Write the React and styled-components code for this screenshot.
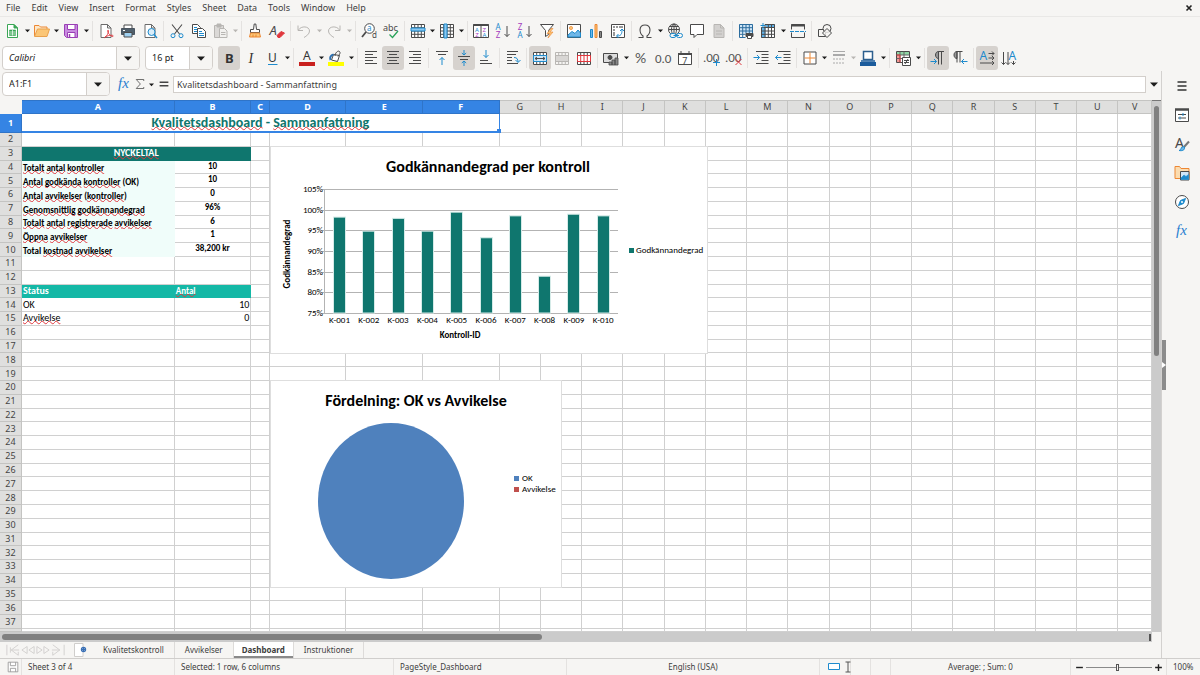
import React from 'react';
import styled, { createGlobalStyle, css } from 'styled-components';

const INK = '#4a4a4a';
const BLUE = '#1e8bcd';
const RED = '#e0383e';
const ORANGE = '#ed8733';
const GREY = '#b8b6b3';
const TEAL = '#0f766e';
const ACCENT = '#3584e4';

const GlobalStyle = createGlobalStyle`
  * { box-sizing: border-box; }
  body {
    margin: 0;
    background: #f6f5f3;
    color: #3d3d3d;
    font: 9px/12px "Noto Sans", sans-serif;
  }
  button, input {
    margin: 0;
    padding: 0;
    border: 0;
    background: none;
    color: inherit;
    font: inherit;
  }
  svg { flex: none; overflow: visible; }
`;

const Window = styled.div`
  display: flex;
  flex-direction: column;
  height: 100vh;
  overflow: hidden;
`;

const MenuBar = styled.nav`
  display: flex;
  align-items: center;
  flex: none;
  height: 17px;
  padding: 0 6px 0 0;
  border-bottom: 1px solid #e9e8e6;
`;

const MenuItem = styled.button`
  padding: 0 5px 0 6px;
`;

const CloseButton = styled.button`
  display: flex;
  margin-left: auto;
`;

const Toolbar = styled.div`
  display: flex;
  align-items: center;
  flex: none;
  height: 27px;
  padding-left: 2px;
`;

const ToolButton = styled.button`
  display: flex;
  align-items: center;
  justify-content: center;
  flex: none;
  width: 22px;
  height: 24px;
  border-radius: 3px;
  background: ${props => (props.$active ? '#d6d2ce' : 'none')};
`;

const ArrowButton = styled.button`
  display: flex;
  align-items: center;
  justify-content: center;
  flex: none;
  width: ${props => (props.$wide ? '8px' : '7px')};
  height: 24px;
`;

const Separator = styled.span`
  flex: none;
  width: 1px;
  height: 20px;
  margin: 0 2px;
  background: #e4e2e0;
`;

const Combo = styled.div`
  display: flex;
  flex: none;
  height: 24px;
  width: ${props => props.$width}px;
  margin-right: 5px;
  border: 1px solid #d3cfcb;
  border-radius: 4px;
  background: #fff;
  overflow: hidden;
`;

const ComboInput = styled.input`
  flex: 1;
  min-width: 0;
  padding-left: 6px;
  color: #222;
  font-style: ${props => (props.$italic ? 'italic' : 'normal')};
`;

const ComboArrow = styled.button`
  display: flex;
  align-items: center;
  justify-content: center;
  width: 23px;
  border-left: 1px solid #d3cfcb;
  background: #f6f5f3;
`;

const Main = styled.div`
  display: flex;
  flex: 1;
  min-height: 0;
`;

const Document = styled.main`
  display: flex;
  flex-direction: column;
  flex: 1;
  min-width: 0;
`;

const FormulaBar = styled.div`
  display: flex;
  align-items: center;
  flex: none;
  height: 29px;
  padding: 0 0 3px 2px;
`;

const FormulaButton = styled.button`
  display: flex;
  align-items: center;
  justify-content: center;
  width: ${props => props.$width || 14}px;
  height: 24px;
`;

const FormulaInput = styled.input`
  flex: 1;
  height: 17px;
  padding: 0 3px;
  border: 1px solid #d3cfcb;
  background: #fff;
`;

const SheetArea = styled.div`
  display: flex;
  flex: 1;
  min-height: 0;
`;

const Canvas = styled.div`
  position: relative;
  flex: 1;
  min-width: 0;
  overflow: hidden;
`;

const Grid = styled.table`
  display: grid;
  height: 100%;
  grid-template-columns:
    22px minmax(0, 1525fr) minmax(0, 765fr) minmax(0, 185fr)
    repeat(3, minmax(0, 765fr)) repeat(15, minmax(0, 412fr)) minmax(0, 335fr);
  grid-template-rows: 14px 19px repeat(36, minmax(0, 1fr)) 3px;

  thead, tbody, tr { display: contents; }
`;

const headCell = css`
  display: flex;
  align-items: center;
  justify-content: center;
  padding: 0;
  overflow: hidden;
  border: 0 solid #c4c4c2;
  border-width: 0 1px 1px 0;
  font-weight: ${props => (props.$selected ? 700 : 400)};
  color: ${props => (props.$selected ? '#fff' : '#444')};
  background: ${props => (props.$selected ? ACCENT : '#dfdfde')};
  ${props => props.$selected && 'border-color: #2f74c8;'}
`;

const ColumnHead = styled.th`
  ${headCell}
  border-top-width: 1px;
`;

const RowHead = styled.th`
  ${headCell}
`;

const Corner = styled.td`
  padding: 0;
`;

const Cell = styled.td`
  display: flex;
  align-items: ${props => props.$valign || 'center'};
  justify-content: ${props => props.$align || 'flex-start'};
  grid-column: span ${props => props.colSpan || 1};
  min-width: 0;
  padding: 0 1px;
  border: 0 solid #d0d0d0;
  border-width: 0 1px 1px 0;
  background: #fff;
  color: #000;
  font-family: Carlito, Lato, sans-serif;
  font-size: ${props => (props.$small ? '9px' : '10px')};
  line-height: 10px;
  font-weight: ${props => (props.$bold ? 700 : 400)};
  white-space: pre;
  ${props => props.$fill && css`
    background: ${props.$fill};
    border-color: ${props.$fill};
  `}
  ${props => props.$color && `color: ${props.$color};`}
  ${props => props.$title && css`
    position: relative;
    font-size: 14px;
    line-height: 16px;
    border-color: ${ACCENT};
    border-bottom-width: 2px;
  `}
`;

const Misspelt = styled.span`
  text-decoration: underline wavy ${RED} 1px;
  text-decoration-skip-ink: none;
  text-underline-offset: -1px;
`;

const FillHandle = styled.span`
  position: absolute;
  right: -2px;
  bottom: -2px;
  width: 4px;
  height: 4px;
  background: ${ACCENT};
`;

const ChartFrame = styled.figure`
  position: absolute;
  left: 270px;
  top: ${props => props.$top}px;
  width: ${props => props.$width}px;
  height: 208px;
  margin: 0;
  background: #fff;
  outline: 1px solid #dedede;
  outline-offset: -1px;

  svg { display: block; }
  text { font-family: Carlito, Lato, sans-serif; font-size: 9px; }
  .title { font-size: 16px; font-weight: 700; }
  .axis { font-weight: 700; }
`;

const VScroll = styled.div`
  flex: none;
  width: 9px;
  padding: 5px 2px;
  background: #cbcbcb;
  border-top: 1px solid #777;
`;

const VThumb = styled.div`
  width: 5px;
  height: 48%;
  border-radius: 3px;
  background: #808080;
`;

const HScroll = styled.div`
  display: flex;
  align-items: center;
  justify-content: space-between;
  flex: none;
  height: 10px;
  margin-right: 9px;
  padding: 0 1px 0 2px;
  background: #cbcbcb;
`;

const HThumb = styled.div`
  width: 47%;
  height: 6px;
  border-radius: 3px;
  background: #808080;
`;

const HGrip = styled.div`
  width: 2px;
  height: 7px;
  background: #555;
`;

const TabBar = styled.div`
  display: flex;
  flex: none;
  height: 16px;
  font-size: 8px;
`;

const TabNav = styled.div`
  display: flex;
  align-items: center;
  width: 71px;
  padding-left: 6px;
`;

const NavButton = styled.button`
  display: flex;
  width: 15px;
`;

const AddTab = styled.button`
  display: flex;
  align-items: center;
  width: 22px;
  padding-left: 2px;
`;

const SheetTab = styled.button`
  padding: 0 10px;
  border-right: 1px solid #dddbd9;
  ${props => props.$active && css`
    padding: 0 8px;
    font-weight: 700;
    background: #fff;
    box-shadow: inset 0 -2px 0 #8a8a8a;
  `}
`;

const SideBar = styled.aside`
  display: flex;
  flex: none;
  width: 39px;
  border-left: 1px solid #d3d1cf;
`;

const Splitter = styled.div`
  display: flex;
  align-items: center;
  align-self: center;
  width: 4px;
  height: 50px;
  background: #8c8c8c;
`;

const Deck = styled.div`
  display: flex;
  flex-direction: column;
  align-items: center;
  flex: 1;
  padding-right: 3px;
`;

const DeckButton = styled.button`
  display: flex;
  align-items: center;
  justify-content: center;
  width: 26px;
  height: 29px;
`;

const StatusBar = styled.footer`
  display: grid;
  flex: none;
  grid-template-columns: 22px 153px 219px 173fr 253fr 31px 20px 20px 180px 96px 33px;
  height: 17px;
  border-top: 1px solid #d0cecc;
  font-size: 8px;
`;

const StatusItem = styled.div`
  display: flex;
  align-items: center;
  justify-content: ${props => (props.$center ? 'center' : 'flex-start')};
  gap: 2px;
  padding: 0 6px;
  border-right: ${props => (props.$last ? '0' : '1px')} solid #e4e2e0;
  white-space: nowrap;
`;

const ZoomSlider = styled.input`
  appearance: none;
  width: 66px;
  height: 9px;

  &::-webkit-slider-runnable-track {
    height: 1px;
    background: #8a8a8a;
  }
  &::-webkit-slider-thumb {
    appearance: none;
    width: 3px;
    height: 7px;
    margin-top: -3px;
    border: 1px solid #555;
    background: #f6f5f3;
  }
`;

const lines = (d, stroke = INK, width = 1) => <path d={d} stroke={stroke} strokeWidth={width} />;
const letter = (ch, x, y, size, fill = INK, extra = {}) => (
  <text x={x} y={y} fontSize={size} fill={fill} stroke="none" {...extra}>{ch}</text>
);

const page = 'M3 1.5h6.500l3.500 3.500v9.500h-10zM9.500 1.500v3.500h3.500';
const gridBox = 'M1.500 1.500h13v13h-13zM1.500 4.700h13M1.500 8h13M1.500 11.300h13M4.700 1.500v13M8 1.500v13M11.300 1.500v13';
const mergeBox = 'M1.500 2.500h13v12h-13zM1.500 5.500h13M1.500 11.500h13M4.700 2.500v3M8 2.500v3M11.300 2.500v3M4.700 11.500v3M8 11.500v3M11.300 11.500v3';

const icons = {
  newDoc: (
    <>
      <path d="M2.500 1.500h6.500l3.500 3.500v9.500h-10z" fill="#fff" stroke="#3aa655" />
      <path d="M9 1.500v3.500h3.500z" fill="#3aa655" stroke="#3aa655" />
      <path d="M4.500 7h6v5.500h-6z" fill="#3aa655" stroke="#3aa655" strokeWidth=".6" />
      {lines('M4.500 9h6M4.500 11h6M7.500 7v5.500', '#fff', 0.7)}
    </>
  ),
  open: (
    <>
      <path d="M.5 13V2.500h4.500l1.500 1.500H13v3" fill="#fde7c8" stroke={ORANGE} />
      <path d="M.5 13.500L3.500 6h12l-2.500 7.500z" fill="#fbc677" stroke="#e9a14d" />
    </>
  ),
  save: (
    <>
      <path d="M1.500 1.500h13v13h-11l-2-2z" fill="#c98be0" stroke="#9a3fb5" />
      <path d="M4.500 1.500h7.500v5h-7.500z" fill="#fff" stroke="#9a3fb5" />
      <path d="M4.500 9.500h7.500v5h-7.500z" fill="#fff" stroke="#9a3fb5" />
      {lines('M6.500 11v3', '#9a3fb5', 1.500)}
    </>
  ),
  pdf: (
    <>
      <path d={page} fill="#fff" stroke="#6b6b6b" />
      <path d="M7 14c2-1 3.500-4 3.500-6 0-1.500-1.300-1-.8.5.7 2.500 3 4.500 4.500 5 1.500.3 1.500-1.300-.5-1.300-2.500 0-4.500.6-6.200 1.800-1.500 1-1.300 1-.5 0z" stroke={RED} strokeWidth=".9" />
    </>
  ),
  print: (
    <>
      <path d="M4 2h8v4H4z" fill="#fff" stroke={INK} />
      <path d="M1.500 5.500h13v6h-13z" fill="#4f5f6b" stroke="#4a5560" />
      <path d="M4 9.500h8v4.500H4z" fill="#9fd0f0" stroke={INK} />
      {lines('M3 7.500h2', '#fff')}
    </>
  ),
  preview: (
    <>
      <path d={page} fill="#fff" stroke="#6b6b6b" />
      <circle cx="9.500" cy="9" r="3.500" fill="#d9edf9" stroke={BLUE} />
      {lines('M12 11.500l3 3.500', BLUE, 1.400)}
    </>
  ),
  cut: (
    <>
      {lines('M3 1.500l7.500 9.500M13 1.500L5.500 11', INK, 1.100)}
      <circle cx="4" cy="12.700" r="2" stroke={BLUE} />
      <circle cx="12" cy="12.700" r="2" stroke={BLUE} />
    </>
  ),
  copy: (
    <>
      <path d="M1.500 1.500h5l3 3v6h-8z" fill="#fff" />
      {lines('M3 4.500h3M3 6.500h3M3 8.500h3', BLUE)}
      <path d="M6.500 5.500h5l3 3v6h-8z" fill="#fff" />
      {lines('M8 8.500h3M8 10.500h5M8 12.500h5', BLUE)}
    </>
  ),
  paste: (
    <>
      <path d="M1.500 2.500h9v12h-9z" fill="#dbd9d7" stroke={GREY} />
      <path d="M4 1h4v3H4z" fill={GREY} stroke={GREY} />
      <path d="M6.500 5.500h5l2.500 2.500v6.500H6.500z" fill="#f2f1ef" stroke={GREY} />
      {lines('M8 9.500h4.500M8 11.500h4.500', GREY)}
    </>
  ),
  clone: (
    <>
      <path d="M7.200 1h1.600l.7 5.500h3v3h-9v-3h3z" fill="#fff" />
      <path d="M3.500 10h9l1 4h-11z" fill="#fbc677" stroke={ORANGE} />
      {lines('M6 11.500v2.500M9 11.500v2.500', ORANGE)}
    </>
  ),
  clear: (
    <>
      {letter('A', 0.500, 12, 13, INK, { fontStyle: 'italic' })}
      <path d="M8 12.500l4-4 3.500 1.500-4.500 4.500H9z" fill={RED} stroke={RED} />
    </>
  ),
  undo: lines('M2 2.500v5h5M2.500 7C5 2.500 13.500 3 13.500 8c0 3-3 5-5.500 6.500', GREY),
  redo: lines('M14 2.500v5H9M13.500 7C11 2.500 2.500 3 2.500 8c0 3 3 5 5.500 6.500', GREY),
  find: (
    <>
      <circle cx="8.500" cy="5.500" r="4.800" fill="#fff" />
      {lines('M5 9L1 14', INK, 1.800)}
      {letter('a', 6, 8, 8, BLUE)}
      {letter('d', 11, 15, 8)}
    </>
  ),
  spell: (
    <>
      {letter('abc', 0, 7.500, 9)}
      {lines('M6.500 11.500l3 3 5.500-6.500', '#2aa35a', 1.300)}
    </>
  ),
  rows: (
    <>
      <path d="M1 1h14v14H1z" fill="#fff" stroke="none" />
      {lines(gridBox)}
      <path d="M1 5h14v3H1z" stroke={BLUE} fill="#8cc8f0" />
    </>
  ),
  columns: (
    <>
      <path d="M1 1h14v14H1z" fill="#fff" stroke="none" />
      {lines(gridBox)}
      <path d="M5 1v14h3V1z" stroke={BLUE} fill="#8cc8f0" />
    </>
  ),
  sort: (
    <>
      <path d="M.5 1.500h15v13H.5zM8 1.500v13" fill="#fff" />
      {lines('M.5 2h15', INK, 2)}
      {letter('A', 2, 8.500, 6, BLUE)}
      {letter('Z', 9.500, 8.500, 6, '#a33bbd')}
      {letter('Z', 2.300, 14, 6, '#a33bbd')}
      {letter('A', 9.500, 14, 6, BLUE)}
    </>
  ),
  sortAsc: (
    <>
      {letter('A', 0.500, 7, 8, BLUE)}
      {letter('Z', 0.800, 15, 8, '#a33bbd')}
      {lines('M12 3v10.500M9.500 11l2.500 2.500L14.500 11')}
    </>
  ),
  sortDesc: (
    <>
      {letter('Z', 0.800, 7, 8, '#a33bbd')}
      {letter('A', 0.500, 15, 8, BLUE)}
      {lines('M12 3v10.500M9.500 11l2.500 2.500L14.500 11')}
    </>
  ),
  filter: (
    <>
      <path d="M1.500 1.500h13L9.500 7.500v4l-3 2v-6z" fill="#fff" />
      <path d="M12 5.500l-4 5h3l-2 4.500 5-6h-3l3-3.500z" fill="#fbc677" stroke={ORANGE} strokeWidth=".6" />
    </>
  ),
  image: (
    <>
      <path d="M1.500 1.500h13v13h-13z" fill="#fff" />
      <circle cx="5" cy="5" r="1.600" fill="#fbc677" stroke={ORANGE} strokeWidth=".7" />
      <path d="M2 12l4-3.500 3 2 3-3.500 2.500 3v4H2z" fill="#6fb7e8" stroke={BLUE} />
    </>
  ),
  chart: (
    <>
      <path d="M2.500 6.500h2v8h-2z" fill="#6fb7e8" stroke={BLUE} />
      <path d="M7 1.500h2v13H7z" fill="#fbc677" stroke={ORANGE} />
      <path d="M11.500 8.500h2v6h-2z" fill="#888" stroke={INK} />
    </>
  ),
  pivot: (
    <>
      <path d="M1.500 1.500h13v13h-13z" fill="#fff" />
      {lines('M3 4h2M6 4h2M9 4h4M4 6v2M4 9v4', '#777', 1.500)}
      {lines('M7 13c4 0 5-2 5-6M8.500 11L6.500 13 8.500 15M10 8l2-2 2 2', BLUE)}
    </>
  ),
  omega: lines('M1.500 14.500h4.500v-1.500C2 10 1.500 2 8 2s6 8 2 11v1.500h4.500', INK, 1.100),
  link: (
    <>
      <circle cx="7" cy="6.500" r="5.500" />
      <ellipse cx="7" cy="6.500" rx="2.500" ry="5.500" />
      {lines('M1.500 6.500h11M2.500 3.500h9M7 1v9')}
      <rect x="3" y="10.500" width="6" height="4" rx="2" fill="#f6f5f3" stroke={BLUE} />
      <rect x="9.500" y="10.500" width="6" height="4" rx="2" fill="#f6f5f3" stroke={BLUE} />
      {lines('M6.500 12.500h5.500', BLUE)}
    </>
  ),
  comment: <path d="M1.500 1.500h13v10H8L5 14.500v-3H1.500z" fill="#fff" />,
  headFoot: (
    <>
      <path d="M3 1.500h6.500l3.500 3.500v9.500h-10z" fill="#d3d1cf" stroke={GREY} />
      {lines('M9.500 1.500v3.500h3.500M5 8h6M5 11h6', GREY)}
    </>
  ),
  printArea: (
    <>
      <path d="M1 1h14v9H1z" fill="#cfe6f7" stroke="none" />
      {lines('M1.500 1.500h13v9M1.500 1.500v13h6M1.500 4.700h13M1.500 8h13M1.500 11.300h6M4.700 1.500v13M8 1.500v9M11.300 1.500v9', '#2d6d9e')}
      <path d="M8 10.500h7v3H8z" fill={INK} />
      <path d="M9.500 12.500h4v3h-4z" fill="#fff" />
    </>
  ),
  freeze: (
    <>
      <path d="M1.500 4.500h13v10h-13z" fill="#fff" stroke="none" />
      <path d="M1 4h4.500v11H1zM6 1h9v3H6z" fill="#5fb0e6" stroke="none" />
      {lines('M1.500 4.500h13v10h-13zM5 1.500h9.500v13M1.500 8h13M1.500 11.300h13M5 1.500v13M8.300 1.500v13M11.500 1.500v13')}
      {lines('M3 0v5M.5 2.500h5', BLUE)}
    </>
  ),
  split: (
    <>
      {lines('M1.500 6.500v-5h13v5M1.500 9.500v5h13v-5')}
      {lines('M1 2.500h14', INK, 2)}
      <path d="M0 8.500h16" stroke={BLUE} strokeDasharray="4 1" />
    </>
  ),
  shapes: (
    <>
      <path d="M1.500 6.500h7v7h-7z" />
      <circle cx="10" cy="5.500" r="4" fill="#f6f5f3" />
      <path d="M10 5.500l4.500 4.500-4.500 4.500-4.500-4.500z" fill="#f6f5f3" fillOpacity=".8" />
    </>
  ),
  bold: letter('B', 4, 12.500, 13, '#333', { fontWeight: 700 }),
  italic: letter('I', 5.500, 13, 14, '#333', { fontFamily: 'Liberation Serif', fontStyle: 'italic' }),
  underline: (
    <>
      {letter('U', 3, 11.500, 12, '#333')}
      {lines('M3 14.500h9.500', BLUE)}
    </>
  ),
  fontColor: (
    <>
      {letter('A', 4, 10, 12, '#333')}
      <path d="M0 12h16v4H0z" fill="#c9211e" stroke="none" />
    </>
  ),
  fillColor: (
    <>
      <path d="M0 12h16v4H0z" fill="#ff0" stroke="none" />
      <path d="M5.500 4.500l6 1-2 6-6-1.500z" fill="#fff" />
      {lines('M7 6c0-3 3-6 4.500-4.500S11 5 10 6.500')}
      {lines('M2.500 10c-1-2 0-5 3-5.500', '#2a6fb0', 2)}
    </>
  ),
  left: lines('M2 1.500h12M2 4.500h8M2 7.500h12M2 10.500h8M2 13.500h12'),
  center: lines('M2 1.500h12M4 4.500h8M2 7.500h12M4 10.500h8M2 13.500h12'),
  right: lines('M2 1.500h12M6 4.500h8M2 7.500h12M6 10.500h8M2 13.500h12'),
  top: (
    <>
      {lines('M2 1.500h12M4 4.500h8')}
      {lines('M8 15V7.500M5.500 10L8 7.500l2.500 2.500', BLUE)}
    </>
  ),
  middle: (
    <>
      {lines('M2 6.500h12M4 9.500h8')}
      {lines('M8 0v5M5.800 3L8 5l2.200-2M8 16v-5M5.800 13L8 11l2.200 2', BLUE)}
    </>
  ),
  bottom: (
    <>
      {lines('M2 13.500h12M2 10.500h8')}
      {lines('M8 0v7.500M5.500 5L8 7.500 10.500 5', BLUE)}
    </>
  ),
  wrap: (
    <>
      {lines('M2 1.500h11M2 4.500h9M2 7.500h5M2 10.500h5M2 13.500h11')}
      {lines('M9 7.500c3 0 4 1.500 4 4.500M10.500 10l2.500 2.500 2.500-2.500', BLUE)}
    </>
  ),
  merge: (
    <>
      <path d="M1 2h14v13H1z" fill="#fff" stroke="none" />
      {lines(mergeBox)}
      <path d="M1.500 5.500h13v6h-13z" fill="#cfe6f7" stroke={BLUE} />
      {lines('M3 8.500h10M5 7L3 8.500 5 10M11 7l2 1.500L11 10', INK)}
    </>
  ),
  mergeCells: (
    <>
      {lines(mergeBox, GREY)}
      <path d="M1.500 5.500h13v6h-13z" fill="#d8d6d4" stroke={GREY} />
    </>
  ),
  unmerge: (
    <>
      <path d="M1 2h14v13H1z" fill="#fff" stroke="none" />
      {lines(mergeBox)}
      {lines('M1.500 5.500h13v6h-13zM4.700 5.500v6M8 5.500v6M11.300 5.500v6', RED)}
    </>
  ),
  currency: (
    <>
      <path d="M.5 3.500h14v9H.5z" fill="#ddd" />
      <circle cx="7" cy="7.500" r="2" fill={INK} />
      <path d="M6 12h3v3H6zM9 10h3v5H9zM12 8h3v7h-3z" fill="#888" stroke={INK} strokeWidth=".8" />
    </>
  ),
  percent: letter('%', 2, 13, 14, '#555', { fontFamily: 'Lato' }),
  number: letter('0.0', 0, 12.500, 13, '#555', { fontFamily: 'Carlito, Lato' }),
  date: (
    <>
      <path d="M1.500 3.500h13v11h-13z" fill="#fff" />
      {lines('M1 4h14', INK, 2)}
      {lines('M4 1v3M12 1v3')}
      {letter('7', 5.300, 13.500, 9)}
    </>
  ),
  addDecimal: (
    <>
      {letter('.00', -1, 12, 13, '#555', { fontFamily: 'Carlito, Lato' })}
      {lines('M12.500 9v7M9 12.500h7', BLUE)}
    </>
  ),
  delDecimal: (
    <>
      {letter('.00', -1, 12, 13, '#555', { fontFamily: 'Carlito, Lato' })}
      {lines('M9.500 9l6 6M15.500 9l-6 6', RED)}
    </>
  ),
  indent: (
    <>
      {lines('M3 1.500h12.500M8.500 4.500h7M8.500 7.500h7M8.500 10.500h7M3 13.500h12.500')}
      {lines('M.5 7.500h6M4 5L6.500 7.500 4 10', BLUE)}
    </>
  ),
  outdent: (
    <>
      {lines('M3 1.500h12.500M8.500 4.500h7M8.500 7.500h7M8.500 10.500h7M3 13.500h12.500')}
      {lines('M.5 7.500h6M3 5L.5 7.500 3 10', BLUE)}
    </>
  ),
  borders: (
    <>
      <path d="M2 2h12v12H2z" fill="#fff" />
      {lines('M8 2.500v11M2.500 8h11', ORANGE)}
    </>
  ),
  lineStyle: (
    <>
      {lines('M2 1.500h12', '#aaa', 1)}
      {lines('M2 5h12', '#aaa', 2)}
      <path d="M2 9h12M2 13h12" stroke="#aaa" strokeDasharray="2 1" />
    </>
  ),
  borderColor: (
    <>
      <path d="M0 12h16v4H0z" fill="#1c5c9c" stroke="none" />
      <path d="M3.500 1.500h9v8h-9z" fill="#fff" stroke="#2d5f8e" strokeWidth="1.500" />
      {lines('M1 11h14', '#1c5c9c', 1.500)}
    </>
  ),
  conditional: (
    <>
      <path d="M1.500 1.500h13v11h-13z" fill="#fff" />
      <path d="M2 2h12v3H2z" fill="#8fd5a5" stroke="none" />
      <path d="M2 5h3v7H2z" fill="#f29a96" stroke="none" />
      {lines('M1.500 5h13M1.500 8.500h13M5 1.500v11M9 1.500v7', '#666')}
      {lines('M1.500 5h3.500v7.500', RED)}
      <path d="M7.500 7.500h8v8h-8z" fill="#fff" />
      {lines('M9 10.500h5M9 12.500h5M13 9l-3 5')}
    </>
  ),
  ltr: (
    <>
      <path d="M8.500 8.500c-4 0-4-7 0-7z" fill="#999" />
      {lines('M8.500 14.500v-13H14M11.500 1.500v13')}
      {lines('M.5 11.500h6M4 9l2.500 2.500L4 14', BLUE)}
    </>
  ),
  rtl: (
    <>
      <path d="M5 8.500c-4 0-4-7 0-7z" fill="#999" />
      {lines('M5 12.500v-11h5.500M8 1.500v11')}
      {lines('M9.500 11.500h6M12 9l-2.500 2.500L12 14', BLUE)}
    </>
  ),
  horizontal: (
    <>
      {letter('A', 0.500, 10, 12, BLUE)}
      {lines('M9.500 3.500h5.500M13 1.500l2 2-2 2M9.500 8h5.500M13 6l2 2-2 2M1 13h14M13 11l2 2-2 2')}
    </>
  ),
  vertical: (
    <>
      {letter('A', 7.500, 10, 12, BLUE)}
      {lines('M2.500 2v12.500M.5 12.500l2 2 2-2M7 2v12.500M5 12.500l2 2 2-2M12.500 11v3.500M10.500 12.500l2 2 2-2')}
    </>
  ),
  fx: letter('fx', 2, 12, 15, '#2a7fd0', { fontFamily: 'Liberation Serif', fontStyle: 'italic' }),
  sigma: lines('M13 4V2H3l5.500 6L3 14h10v-2', '#444'),
  equals: lines('M3 6h10M3 10h10', '#444', 1.500),
  menu: lines('M3.500 4h9M3.500 8h9M3.500 12h9', '#333', 1.500),
  properties: (
    <>
      <path d="M1.500 2.500h13v12h-13z" fill="#fff" />
      {lines('M1 2.500h14', INK, 2.500)}
      {lines('M4 7.500h8M4 11h8', INK)}
      {lines('M9 6v3M6 9.500v3', BLUE)}
    </>
  ),
  styles: (
    <>
      {letter('A', 1, 11.500, 14)}
      <path d="M15 5.500l-5 5.500" strokeWidth="2" stroke="#777" />
      <path d="M5 14.500c3 .5 6 0 5.500-3.500-2-.8-3.500.5-3.500 1.500s-1 1.500-2 2z" fill="#6fb7e8" stroke={BLUE} />
    </>
  ),
  gallery: (
    <>
      <path d="M1 13.500v-12h4.500l1.500 2h8v10z" fill="#fbdcb0" stroke={ORANGE} />
      <path d="M6.500 6.500h8.500v8.500H6.500z" fill="#cfe6f7" />
      <path d="M7 13l3-3 2 1.500 2.500-2v5H7z" fill={BLUE} stroke={BLUE} strokeWidth=".6" />
    </>
  ),
  navigator: (
    <>
      <circle cx="8" cy="8" r="6.500" fill="#fff" />
      <path d="M11.500 4.500L9.500 9.500l-5 2 2-5z" fill={BLUE} stroke={BLUE} />
      <circle cx="8" cy="8" r="1" fill="#fff" stroke="none" />
    </>
  ),
  close: lines('M4 4l8 8M12 4l-8 8', '#222', 2.600),
  addSheet: (
    <>
      <path d="M1.500 1.500h8.500v13H1.500z" fill="#fff" stroke="#d0cecc" />
      <circle cx="10.500" cy="7.500" r="2" fill="#fff" stroke="#3a70b5" strokeWidth="1.400" />
      {lines('M9 7.500h3M10.500 6v3', '#3a70b5')}
    </>
  ),
  first: lines('M1 2v12M14 2L6 8l8 6v-4M5 5v6M6 8h9', '#cfcdcb'),
  previous: lines('M7 4L1 8l6 4zM15 4L9 8l6 4z', '#cfcdcb'),
  next: lines('M1 4l6 4-6 4zM9 4l6 4-6 4z', '#cfcdcb'),
  last: lines('M15 2v12M2 2l8 6-8 6v-4M1 8h9', '#cfcdcb'),
  disk: (
    <>
      <path d="M2.500 2.500h11v11h-11z" fill="#fff" stroke="#999" />
      {lines('M5 2.500v4h6v-4M5 13.500v-4h6v4', '#999')}
    </>
  ),
  selection: <path d="M2.500 4.500h11v6h-11z" fill="#fff" stroke={BLUE} />,
  cursor: lines('M1.500 3h5M4 3v10M1.500 13h5', '#555'),
  minus: lines('M2 8h12', '#222', 2.500),
  plus: lines('M2 8h12M8 2v12', '#222', 2.500),
};

const Icon = ({ name, size = 16 }) => (
  <svg width={size} height={size} viewBox="0 0 16 16" fill="none" stroke={INK}
    fontFamily="Noto Sans" aria-hidden="true">
    {icons[name]}
  </svg>
);

const Caret = ({ size = 5, muted }) => (
  <svg width={size} height={size} viewBox="0 0 10 10" aria-hidden="true">
    <path d="M0 3h10L5 8.500z" fill={muted ? GREY : '#1c1c1c'} />
  </svg>
);

// '|' is a separator, 'v' and 'V' are menu arrows (normal and wide),
// 'x' marks a disabled arrow, '*' an active button
const standardTools = 'newDoc v open v save V | pdf print preview | cut copy paste x | clone clear | undo X redo X | find spell | rows v columns v | sort sortAsc sortDesc filter | image chart pivot | omega V link comment headFoot | printArea freeze V split | shapes';
const formatTools = 'bold* italic underline v | fontColor v fillColor V | left center* right | top middle* bottom | wrap | merge* mergeCells unmerge | currency V percent number date | addDecimal delDecimal | indent outdent | borders v lineStyle x borderColor V | conditional V | ltr* rtl | horizontal* vertical';

const Tools = ({ items }) => items.split(' ').map((item, i) => {
  if (item === '|') return <Separator key={i} />;
  if (item.length === 1) {
    return (
      <ArrowButton key={i} $wide={item === item.toUpperCase()} aria-label="More">
        <Caret muted={item.toLowerCase() === 'x'} />
      </ArrowButton>
    );
  }
  const name = item.replace('*', '');
  return (
    <ToolButton key={i} $active={item.endsWith('*')} aria-label={name}>
      <Icon name={name} />
    </ToolButton>
  );
});

const ComboBox = ({ label, value, width, italic }) => (
  <Combo $width={width}>
    <ComboInput aria-label={label} defaultValue={value} $italic={italic} />
    <ComboArrow aria-label={`${label} list`}><Caret size={8} /></ComboArrow>
  </Combo>
);

const columns = 'ABCDEFGHIJKLMNOPQRSTUV'.split('');

// words between underscores are flagged by the spell checker
const spelled = text => text.split('_').map((part, i) => (
  i % 2 ? <Misspelt key={i}>{part}</Misspelt> : part
));

const label = text => ({ text, $bold: true, $small: true, $fill: '#f0fdfa', $valign: 'flex-end' });
const figure = text => ({ text, $bold: true, $small: true, $align: 'center', $valign: 'flex-start' });

const cells = {
  1: [{
    text: '_Kvalitetsdashboard_ - _Sammanfattning_', colSpan: 6, $title: true,
    $bold: true, $align: 'center', $color: TEAL,
  }],
  3: [{ text: '_NYCKELTAL_', colSpan: 2, $bold: true, $align: 'center', $color: '#fff', $fill: TEAL }],
  4: [label('_Totalt_ _antal_ _kontroller_'), figure('10')],
  5: [label('_Antal_ _godkända_ _kontroller_ (OK)'), figure('10')],
  6: [label('_Antal_ _avvikelser_ (_kontroller_)'), figure('0')],
  7: [label('_Genomsnittlig_ _godkännandegrad_'), figure('96%')],
  8: [label('_Totalt_ _antal_ _registrerade_ _avvikelser_'), figure('6')],
  9: [label('_Öppna_ _avvikelser_'), figure('1')],
  10: [label('Total _kostnad_ _avvikelser_'), figure('38,200 kr')],
  13: [
    { text: 'Status', $bold: true, $color: '#fff', $fill: '#14b8a6' },
    { text: '_Antal_', $bold: true, $small: true, $color: '#fff', $fill: '#14b8a6' },
  ],
  14: [{ text: 'OK' }, { text: '10', $align: 'flex-end' }],
  15: [{ text: '_Avvikelse_' }, { text: '0', $align: 'flex-end' }],
};

const Row = ({ number }) => {
  const filled = cells[number] || [];
  const used = filled.reduce((sum, cell) => sum + (cell.colSpan || 1), 0);
  return (
    <tr>
      <RowHead scope="row" $selected={number === 1}>{number < 38 ? number : ''}</RowHead>
      {filled.map(({ text, ...rest }, i) => (
        <Cell key={i} {...rest}>
          <span>{spelled(text)}</span>
          {rest.$title && <FillHandle />}
        </Cell>
      ))}
      {columns.slice(used).map(col => <Cell key={col} />)}
    </tr>
  );
};

const controls = [98.2, 94.8, 97.9, 94.8, 99.4, 93.2, 98.5, 83.9, 98.9, 98.5];
const ticks = [105, 100, 95, 90, 85, 80, 75];
const yOf = value => 43 + ((105 - value) / 30) * 124;

const BarChart = () => (
  <ChartFrame $top={46} $width={438}>
    <svg width="438" height="208" role="img" aria-label="Godkännandegrad per kontroll">
      <text className="title" x="218" y="26" textAnchor="middle">Godkännandegrad per kontroll</text>
      {ticks.map(tick => (
        <g key={tick}>
          <path d={`M52 ${Math.round(yOf(tick)) + 0.5}H348`} stroke="#b3b3b3" />
          <text x="53" y={yOf(tick) + 3} textAnchor="end">{tick}%</text>
        </g>
      ))}
      <path d="M54.500 43v124" stroke="#b3b3b3" />
      {controls.map((value, i) => (
        <g key={i}>
          <rect x={Math.round(64 + i * 29.3) - 0.5} y={yOf(value)} width="12" height={167 - yOf(value)}
            fill={TEAL} stroke="#d5ebe8" />
          <text x={69.500 + i * 29.3} y="177" textAnchor="middle">K-{String(i + 1).padStart(3, '0')}</text>
        </g>
      ))}
      <text className="axis" x="190" y="192" textAnchor="middle">Kontroll-ID</text>
      <text className="axis" transform="translate(20 108) rotate(-90)" textAnchor="middle">Godkännandegrad</text>
      <rect x="359" y="102" width="5" height="5" fill={TEAL} />
      <text x="366" y="107">Godkännandegrad</text>
    </svg>
  </ChartFrame>
);

const PieChart = () => (
  <ChartFrame $top={280} $width={292}>
    <svg width="292" height="208" role="img" aria-label="Fördelning: OK vs Avvikelse">
      <text className="title" x="146" y="26" textAnchor="middle">Fördelning: OK vs Avvikelse</text>
      <ellipse cx="121" cy="121" rx="73" ry="78" fill="#4f81bd" />
      <rect x="244" y="96" width="5" height="5" fill="#4f81bd" />
      <text x="252" y="101">OK</text>
      <rect x="244" y="107" width="5" height="5" fill="#c0504d" />
      <text x="252" y="112">Avvikelse</text>
    </svg>
  </ChartFrame>
);

const menus = ['File', 'Edit', 'View', 'Insert', 'Format', 'Styles', 'Sheet', 'Data', 'Tools', 'Window', 'Help'];
const tabs = ['Kvalitetskontroll', 'Avvikelser', 'Dashboard', 'Instruktioner'];
const decks = ['menu', 'properties', 'styles', 'gallery', 'navigator', 'fx'];

const App = () => (
  <Window>
    <GlobalStyle />
    <MenuBar>
      {menus.map(menu => <MenuItem key={menu}>{menu}</MenuItem>)}
      <CloseButton aria-label="Close"><Icon name="close" size={10} /></CloseButton>
    </MenuBar>
    <Toolbar><Tools items={standardTools} /></Toolbar>
    <Toolbar>
      <ComboBox label="Font name" value="Calibri" width={138} italic />
      <ComboBox label="Font size" value="16 pt" width={68} />
      <Tools items={formatTools} />
    </Toolbar>
    <Main>
      <Document>
        <FormulaBar>
          <ComboBox label="Name box" value="A1:F1" width={108} />
          <FormulaButton aria-label="Function wizard" $width={18}><Icon name="fx" /></FormulaButton>
          <FormulaButton aria-label="Select function"><Icon name="sigma" size={12} /></FormulaButton>
          <ArrowButton $wide aria-label="More functions"><Caret /></ArrowButton>
          <FormulaButton aria-label="Formula" $width={18}><Icon name="equals" size={14} /></FormulaButton>
          <FormulaInput aria-label="Input line" defaultValue="Kvalitetsdashboard - Sammanfattning" />
          <FormulaButton aria-label="Expand" $width={15}><Caret size={8} /></FormulaButton>
        </FormulaBar>
        <SheetArea>
          <Canvas>
            <Grid>
              <thead>
                <tr>
                  <Corner />
                  {columns.map((col, i) => (
                    <ColumnHead key={col} scope="col" $selected={i < 6}>{col}</ColumnHead>
                  ))}
                </tr>
              </thead>
              <tbody>
                {Array.from({ length: 38 }, (_, i) => <Row key={i} number={i + 1} />)}
              </tbody>
            </Grid>
            <BarChart />
            <PieChart />
          </Canvas>
          <VScroll><VThumb /></VScroll>
        </SheetArea>
        <HScroll><HThumb /><HGrip /></HScroll>
        <TabBar>
          <TabNav>
            {['first', 'previous', 'next', 'last'].map(name => (
              <NavButton key={name} aria-label={name}><Icon name={name} size={14} /></NavButton>
            ))}
          </TabNav>
          <AddTab aria-label="Add sheet"><Icon name="addSheet" /></AddTab>
          {tabs.map(tab => <SheetTab key={tab} $active={tab === 'Dashboard'}>{tab}</SheetTab>)}
        </TabBar>
      </Document>
      <SideBar>
        <Splitter>
          <svg width="4" height="6" viewBox="0 0 4 6" aria-hidden="true"><path d="M0 0l4 3-4 3z" fill="#fff" /></svg>
        </Splitter>
        <Deck>
          {decks.map(name => (
            <DeckButton key={name} aria-label={name}><Icon name={name} /></DeckButton>
          ))}
        </Deck>
      </SideBar>
    </Main>
    <StatusBar>
      <StatusItem><Icon name="disk" size={14} /></StatusItem>
      <StatusItem>Sheet 3 of 4</StatusItem>
      <StatusItem>Selected: 1 row, 6 columns</StatusItem>
      <StatusItem>PageStyle_Dashboard</StatusItem>
      <StatusItem $center>English (USA)</StatusItem>
      <StatusItem><Icon name="selection" /><Icon name="cursor" /></StatusItem>
      <StatusItem />
      <StatusItem />
      <StatusItem $center>Average: ; Sum: 0</StatusItem>
      <StatusItem $center>
        <Icon name="minus" size={9} />
        <ZoomSlider type="range" aria-label="Zoom" min="0" max="100" defaultValue="48" />
        <Icon name="plus" size={9} />
      </StatusItem>
      <StatusItem $last>100%</StatusItem>
    </StatusBar>
  </Window>
);

export default App;
